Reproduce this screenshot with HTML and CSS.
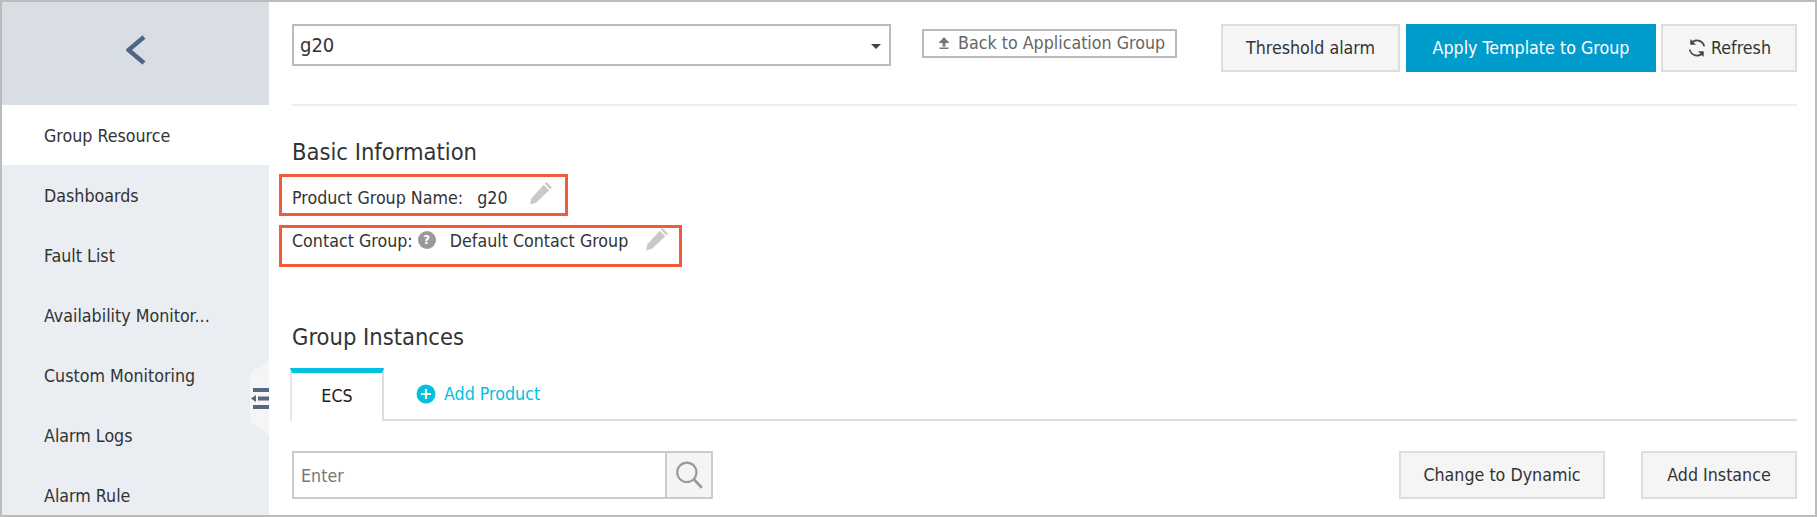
FILE: index.html
```html
<!DOCTYPE html>
<html lang="en">
<head>
<meta charset="utf-8">
<title>Group Resource</title>
<link rel="stylesheet" href="styles.css">
</head>
<body>
<div class="app">
  <aside class="sidebar">
    <div class="back">
      <svg class="chevron" viewBox="0 0 20 30"><path d="M18 2 L2.500 15 L18 28" fill="none" stroke="#4f6785" stroke-width="4.500"/></svg>
    </div>
    <nav class="nav">
      <a class="nav-item active">Group Resource</a>
      <a class="nav-item">Dashboards</a>
      <a class="nav-item">Fault List</a>
      <a class="nav-item">Availability Monitor...</a>
      <a class="nav-item">Custom Monitoring</a>
      <a class="nav-item">Alarm Logs</a>
      <a class="nav-item">Alarm Rule</a>
    </nav>
    <div class="collapse">
      <svg viewBox="0 0 19 75" width="19" height="75">
        <path d="M19 0 L0 13 L0 62 L19 75 Z" fill="#f5f5f5"/>
        <rect x="3" y="28" width="16" height="4" fill="#56687f"/>
        <rect x="3" y="45" width="16" height="4" fill="#56687f"/>
        <rect x="8" y="36.500" width="11" height="4" fill="#56687f"/>
        <path d="M1 38.500 L6 35 L6 42 Z" fill="#56687f"/>
      </svg>
    </div>
  </aside>
  <main class="main">
    <div class="toolbar">
      <div class="select"><span>g20</span><i class="caret"></i></div>
      <a class="back-link">
        <svg class="up" viewBox="0 0 14 14" width="14" height="14"><path d="M7 1 L12.500 7 H1.500 Z M5.500 7 H8.500 V10.500 H5.500 Z M2.500 11.500 H11.500 V13 H2.500 Z" fill="#777"/></svg>
        Back to Application Group
      </a>
      <div class="actions">
        <button class="btn threshold">Threshold alarm</button>
        <button class="btn primary">Apply Template to Group</button>
        <button class="btn refresh">
          <svg viewBox="0 0 18 18" width="20" height="20"><path d="M15.500 7.500 A6.700 6.700 0 0 0 3.500 5 M2.500 10.500 A6.700 6.700 0 0 0 14.500 13" fill="none" stroke="#444" stroke-width="1.500"/><path d="M3 1 V6 H8 Z M15 17 V12 H10 Z" fill="#444"/></svg>
          Refresh
        </button>
      </div>
    </div>
    <hr class="rule">
    <h2 class="heading basic">Basic Information</h2>
    <div class="field name">
      <span>Product Group Name:</span><span class="value-name">g20</span>
      <svg class="pencil pencil-name" viewBox="0 0 22 22" width="24" height="24"><path d="M16 1 L21 6 L19.500 7.500 L14.500 2.500 Z M13.500 3.500 L18.500 8.500 L6.500 20 L1 21.500 L2 16 Z" fill="#c9c9c9"/></svg>
    </div>
    <div class="field contact">
      <span>Contact Group:</span>
      <span class="help">?</span>
      <span class="value-contact">Default Contact Group</span>
      <svg class="pencil pencil-contact" viewBox="0 0 22 22" width="24" height="24"><path d="M16 1 L21 6 L19.500 7.500 L14.500 2.500 Z M13.500 3.500 L18.500 8.500 L6.500 20 L1 21.500 L2 16 Z" fill="#c9c9c9"/></svg>
    </div>
    <h2 class="heading instances">Group Instances</h2>
    <div class="tabs">
      <div class="tab">ECS</div>
      <a class="add-product">
        <svg viewBox="0 0 20 20" width="20" height="20"><circle cx="10" cy="10" r="9.500" fill="#00c1de"/><path d="M10 5 V15 M5 10 H15" stroke="#fff" stroke-width="2.200"/></svg>
        Add Product
      </a>
    </div>
    <div class="filter">
      <div class="search">
        <span class="placeholder">Enter</span>
        <span class="search-btn">
          <svg viewBox="0 0 28 28" width="30" height="30"><circle cx="12" cy="11.500" r="9" fill="none" stroke="#999" stroke-width="2"/><path d="M18.500 18 L26 26" stroke="#999" stroke-width="2.500"/></svg>
        </span>
      </div>
      <div class="filter-actions">
        <button class="btn dynamic">Change to Dynamic</button>
        <button class="btn add-instance">Add Instance</button>
      </div>
    </div>
  </main>
</div>
</body>
</html>
```

FILE: styles.css
```css
* { box-sizing: border-box; }
html, body { margin: 0; height: 100%; overflow: hidden; background: #fff; }
body { font-family: "DejaVu Sans", sans-serif; font-stretch: condensed; font-size: 17.700px; color: #333; }

.app {
  display: flex;
  height: 517px;
  border: 2px solid #bcbcbc;
  overflow: hidden;
}

.sidebar {
  position: relative;
  flex: 0 0 267px;
  background: #eaedf2;
}
.back {
  height: 103px;
  background: #d9dee5;
  display: flex;
  justify-content: center;
  padding-top: 33px;
  padding-right: 0;
}
.chevron { width: 20px; height: 30px; }
.nav { display: flex; flex-direction: column; }
.nav-item {
  height: 60px;
  line-height: 62px;
  padding-left: 42px;
  color: #333;
}
.nav-item.active { background: #fff; }
.collapse {
  position: absolute;
  right: 0;
  top: 358px;
  width: 19px;
  height: 75px;
  line-height: 0;
}

.main {
  flex: 1;
  min-width: 0;
  padding: 22px 18px 0 23px;
}

.toolbar { display: flex; align-items: flex-start; height: 48px; }
.select {
  width: 599px;
  height: 42px;
  border: 2px solid #bbb;
  display: flex;
  align-items: center;
  justify-content: space-between;
  padding: 0 8px 1px 6px;
  font-size: 20px;
}
.caret {
  width: 0;
  height: 0;
  margin-top: 3px;
  border-left: 5px solid transparent;
  border-right: 5px solid transparent;
  border-top: 5px solid #444;
}
.back-link {
  margin: 5px 0 0 31px;
  width: 255px;
  height: 29px;
  border: 2px solid #bbb;
  display: flex;
  align-items: center;
  gap: 7px;
  padding: 0 0 1px 13px;
  color: #666;
  white-space: nowrap;
}
.up { flex: none; }

.actions { margin-left: auto; display: flex; }
.btn {
  height: 48px;
  border: 2px solid #ddd;
  background: #f5f5f5;
  color: #333;
  font: inherit;
  padding: 0;
  display: flex;
  align-items: center;
  justify-content: center;
  white-space: nowrap;
}
.threshold { width: 179px; }
.primary {
  width: 250px;
  margin-left: 6px;
  background: #009ccc;
  border-color: #009ccc;
  color: #fff;
}
.refresh { width: 136px; margin-left: 5px; gap: 4px; }

.rule {
  margin: 32px 0 0;
  border: 0;
  height: 2px;
  background: #eee;
}

.heading {
  margin: 0;
  font-size: 23.500px;
  font-weight: 400;
  line-height: 28px;
  color: #333;
}
.basic { margin-top: 32px; }

.field {
  display: flex;
  border: 3px solid #f25a38;
  margin-left: -13px;
  height: 42px;
  padding-left: 10px;
  position: relative;
}
.name { margin-top: 8px; width: 289px; align-items: center; padding-top: 6px; }
.value-name { margin-left: 14px; }
.pencil-name { margin-left: 21px; margin-top: -11px; }
.contact { margin-top: 9px; width: 403px; margin-left: -13px; align-items: flex-start; padding-top: 3px; }
.help {
  width: 18px;
  height: 18px;
  margin: 0 0 0 5px;
  border-radius: 50%;
  background: #999;
  color: #fff;
  font-size: 13px;
  font-weight: 700;
  line-height: 18px;
  text-align: center;
}
.value-contact { margin-left: 14px; }
.pencil-contact { margin-left: 17px; margin-top: -4px; }

.instances { margin-top: 56px; }

.tabs {
  display: flex;
  align-items: stretch;
  margin-top: 17px;
  margin-left: -2px;
  height: 53px;
  border-bottom: 2px solid #ddd;
}
.tab {
  width: 94px;
  margin-bottom: -2px;
  padding-bottom: 2px;
  border-top: 5px solid #00c1de;
  border-left: 2px solid #e6e6e6;
  border-right: 2px solid #ddd;
  background: #fff;
  color: #222;
  display: flex;
  align-items: center;
  justify-content: center;
}
.add-product {
  margin-left: 32px;
  display: flex;
  align-items: center;
  gap: 8px;
  color: #00c1de;
}

.filter {
  margin-top: 30px;
  display: flex;
  justify-content: space-between;
  align-items: center;
}
.search {
  width: 421px;
  height: 48px;
  border: 2px solid #ccc;
  display: flex;
}
.placeholder { flex: 1; padding-left: 7px; line-height: 46px; color: #777; }
.search-btn {
  width: 46px;
  border-left: 2px solid #ccc;
  background: #f4f4f4;
  display: flex;
  align-items: center;
  justify-content: center;
}
.filter-actions { display: flex; gap: 36px; }
.dynamic { width: 206px; }
.add-instance { width: 156px; }
```
